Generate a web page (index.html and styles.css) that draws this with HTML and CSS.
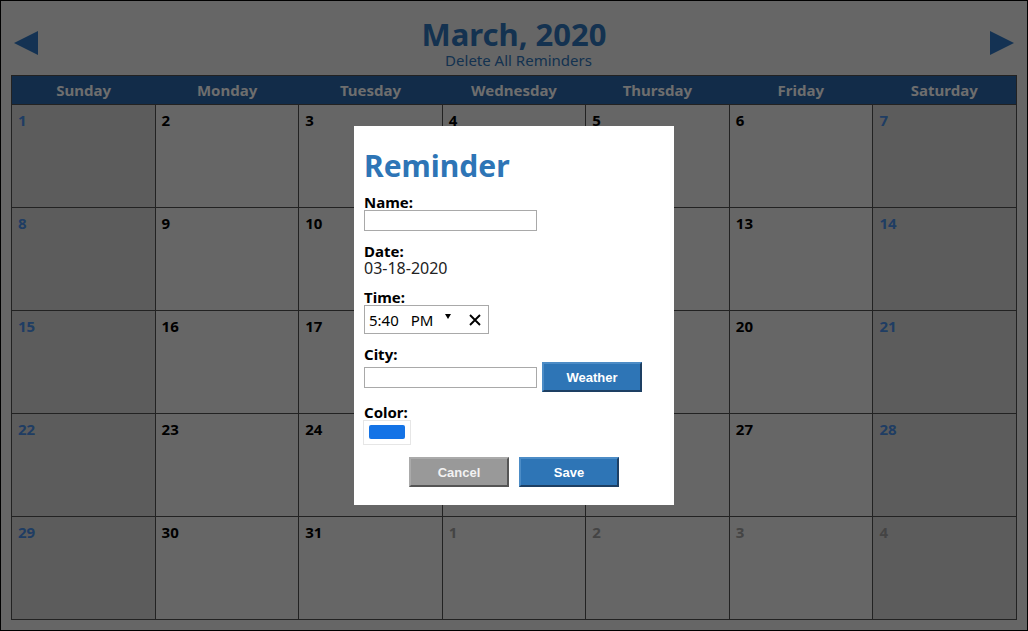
FILE: index.html
```html
<!DOCTYPE html>
<html lang="en">
<head>
<meta charset="utf-8">
<title>Calendar</title>
<link rel="stylesheet" href="styles.css">
</head>
<body>
<div class="calendar">
  <header class="cal-head">
    <button class="nav prev" aria-label="Previous month">
      <svg viewBox="0 0 24 24" width="24" height="24"><polygon points="24,0 24,24 0,12"/></svg>
    </button>
    <div class="title-block">
      <h1 class="month">March, 2020</h1>
      <a class="delete-all">Delete All Reminders</a>
    </div>
    <button class="nav next" aria-label="Next month">
      <svg viewBox="0 0 24 24" width="24" height="24"><polygon points="0,0 0,24 24,12"/></svg>
    </button>
  </header>
  <div class="dow-row">
    <div>Sunday</div><div>Monday</div><div>Tuesday</div><div>Wednesday</div><div>Thursday</div><div>Friday</div><div>Saturday</div>
  </div>
  <div class="days">
    <div class="cell weekend">1</div><div class="cell">2</div><div class="cell">3</div><div class="cell">4</div><div class="cell">5</div><div class="cell">6</div><div class="cell weekend">7</div>
    <div class="cell weekend">8</div><div class="cell">9</div><div class="cell">10</div><div class="cell">11</div><div class="cell">12</div><div class="cell">13</div><div class="cell weekend">14</div>
    <div class="cell weekend">15</div><div class="cell">16</div><div class="cell">17</div><div class="cell">18</div><div class="cell">19</div><div class="cell">20</div><div class="cell weekend">21</div>
    <div class="cell weekend">22</div><div class="cell">23</div><div class="cell">24</div><div class="cell">25</div><div class="cell">26</div><div class="cell">27</div><div class="cell weekend">28</div>
    <div class="cell weekend">29</div><div class="cell">30</div><div class="cell">31</div><div class="cell other">1</div><div class="cell other">2</div><div class="cell other">3</div><div class="cell weekend other">4</div>
  </div>
</div>

<div class="overlay">
  <div class="modal">
    <h2 class="modal-title">Reminder</h2>
    <div class="field">
      <label>Name:</label>
      <div class="text-input"></div>
    </div>
    <div class="field">
      <label>Date:</label>
      <div class="date-value">03-18-2020</div>
    </div>
    <div class="field">
      <label>Time:</label>
      <div class="time-input">
        <span class="t-hm">5:40</span>
        <span class="t-pm">PM</span>
        <svg class="t-caret" viewBox="0 0 6 5" width="6" height="5"><polygon points="0,0 6,0 3,5" fill="#000"/></svg>
        <svg class="t-clear" viewBox="0 0 12 12" width="12" height="12"><path d="M1 1 L11 11 M11 1 L1 11" stroke="#000" stroke-width="1.9" fill="none"/></svg>
      </div>
    </div>
    <div class="field">
      <label>City:</label>
      <div class="city-row">
        <div class="text-input"></div>
        <button class="btn btn-blue weather">Weather</button>
      </div>
    </div>
    <div class="field last">
      <label>Color:</label>
      <div class="color-input"><span class="swatch"></span></div>
    </div>
    <div class="actions">
      <button class="btn btn-gray">Cancel</button>
      <button class="btn btn-blue">Save</button>
    </div>
  </div>
</div>
</body>
</html>
```
FILE: styles.css
```css
* { box-sizing: border-box; }

html, body {
  margin: 0;
  padding: 0;
}

body {
  width: 1028px;
  height: 631px;
  font-family: "Noto Sans", "Open Sans", sans-serif;
  background: #ccc;
  overflow: hidden;
}

.calendar {
  width: 1028px;
  height: 631px;
  border: 1px solid #000;
  padding: 10px;
  background: #cccccc;
}

.cal-head {
  height: 64px;
  display: flex;
  align-items: flex-start;
  justify-content: space-between;
}

.nav {
  border: 0;
  background: none;
  padding: 0;
  margin-top: 20px;
  width: 24px;
  height: 24px;
  cursor: pointer;
  display: block;
}
.nav svg { display: block; fill: #2864a6; }
.prev { margin-left: 3px; }
.next { margin-right: 3px; }

.title-block {
  display: flex;
  flex-direction: column;
  align-items: center;
}

.month {
  margin: 6px 0 0;
  font-size: 31px;
  line-height: 34px;
  font-weight: 700;
  color: #2864a0;
}

.delete-all {
  font-size: 15px;
  line-height: 18px;
  padding-left: 9px;
  color: #2864a0;
}

.dow-row {
  display: grid;
  grid-template-columns: repeat(7, 1fr);
  height: 29px;
  border: 1px solid #444;
  border-bottom: 0;
  background: #245892;
}
.dow-row div {
  text-align: center;
  font-weight: 700;
  font-size: 15px;
  line-height: 28px;
  color: #dcdcdc;
}

.days {
  display: grid;
  grid-template-columns: repeat(7, 1fr);
  grid-auto-rows: 103px;
  border-top: 1px solid #444;
  border-left: 1px solid #444;
}

.cell {
  border-right: 1px solid #444;
  border-bottom: 1px solid #444;
  padding: 5px 6px;
  font-size: 15px;
  line-height: 20px;
  font-weight: 700;
  color: #000;
  background: #cccccc;
}
.cell.weekend {
  background: #b8b8b8;
  color: #3e7ac6;
}
.cell.other { color: #888; }
.cell.weekend.other { color: #888; }

.overlay {
  position: fixed;
  inset: 0;
  background: rgba(0, 0, 0, 0.5);
  display: flex;
  align-items: center;
  justify-content: center;
}

.modal {
  width: 320px;
  height: 379px;
  background: #fff;
  padding: 20px 10px 0;
}

.modal-title {
  margin: 0 0 9px;
  font-size: 30px;
  line-height: 40px;
  font-weight: 700;
  color: #2e75b6;
}

.field {
  margin-bottom: 13px;
}
.field.last { margin-bottom: 12px; }

.field label {
  display: block;
  font-size: 15px;
  line-height: 15px;
  font-weight: 700;
  color: #000;
}

.text-input {
  width: 173px;
  height: 21px;
  border: 1px solid #a9a9a9;
  background: #fff;
}

.date-value {
  font-size: 16px;
  line-height: 18px;
  color: #222;
}

.time-input {
  width: 125px;
  height: 29px;
  border: 1px solid #a9a9a9;
  display: flex;
  align-items: center;
  padding-left: 4px;
  font-size: 15px;
  color: #000;
}
.t-pm { margin-left: 12px; }
.t-caret {
  display: block;
  margin-left: 12px;
  margin-top: -6px;
}
.t-clear {
  display: block;
  margin-left: 18px;
}

.city-row {
  display: flex;
  align-items: center;
  gap: 5px;
}

.color-input {
  width: 48px;
  height: 25px;
  border: 1px solid #e6e6e6;
  padding: 4px 5px;
  margin-left: -1px;
}
.swatch {
  display: block;
  width: 36px;
  height: 14px;
  background: #1473e6;
  border-radius: 2px;
}

.actions {
  display: flex;
  justify-content: center;
  gap: 10px;
}

.btn {
  width: 100px;
  height: 30px;
  font-family: "Liberation Sans", Arial, sans-serif;
  font-size: 13px;
  font-weight: 700;
  color: #fff;
  border: 2px solid;
  padding: 0;
  cursor: pointer;
}
.btn-blue {
  background: #2e75b6;
  border-color: #4c8cc6 #1d3f63 #1d3f63 #4c8cc6;
}
.btn-gray {
  background: #999;
  color: #f2f2f2;
  border-color: #aaa #555 #555 #aaa;
}
```
